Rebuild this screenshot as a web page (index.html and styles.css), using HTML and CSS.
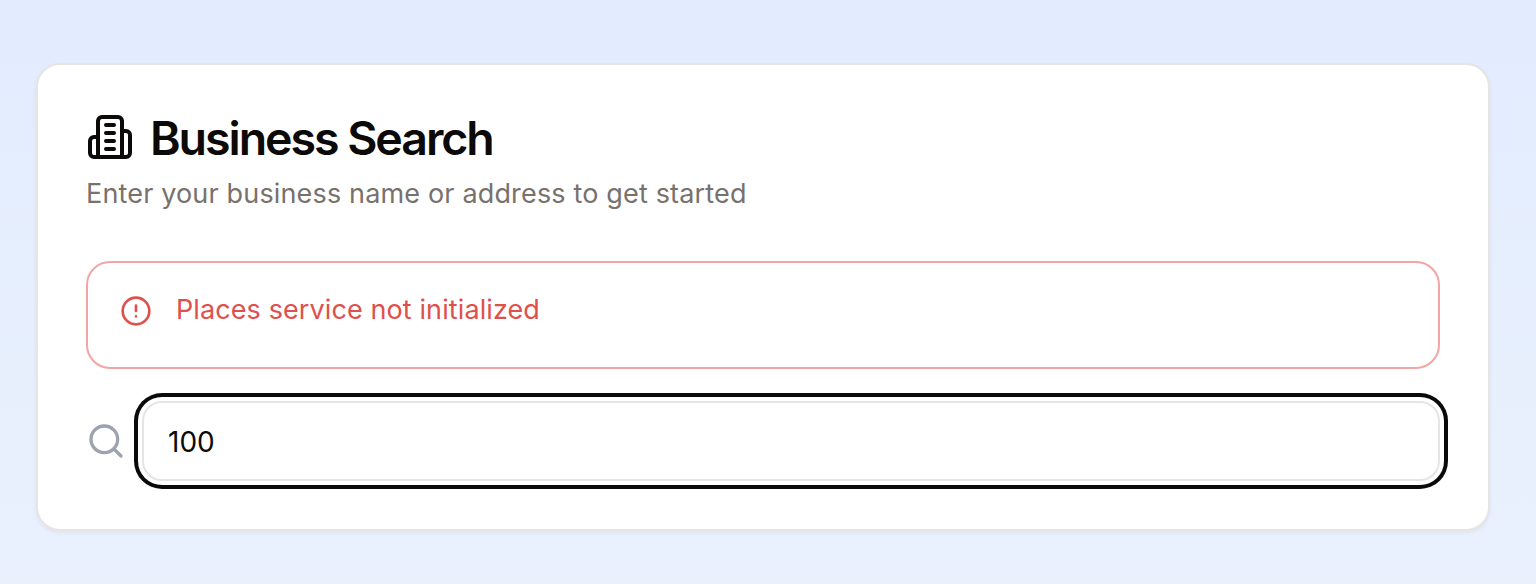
FILE: index.html
```html
<!DOCTYPE html>
<html lang="en">
<head>
<meta charset="utf-8">
<title>Business Search</title>
<link rel="stylesheet" href="styles.css">
</head>
<body>
<main class="card">
  <header class="card-header">
    <h1 class="title">
      <svg class="title-icon" viewBox="0 0 24 24"><path d="M6 22V4a2 2 0 0 1 2-2h8a2 2 0 0 1 2 2v18Z"/><path d="M6 12H4a2 2 0 0 0-2 2v6a2 2 0 0 0 2 2h2"/><path d="M18 9h2a2 2 0 0 1 2 2v9a2 2 0 0 1-2 2h-2"/><path d="M10 6h4M10 10h4M10 14h4M10 18h4"/></svg>
      <span class="title-text">Business Search</span>
    </h1>
    <p class="description">Enter your business name or address to get started</p>
  </header>
  <div class="alert" role="alert">
    <svg class="alert-icon" viewBox="0 0 24 24"><circle cx="12" cy="12" r="10"/><path d="M12 8v4M12 16h.01"/></svg>
    <span class="alert-text">Places service not initialized</span>
  </div>
  <div class="search">
    <svg class="search-icon" viewBox="0 0 24 24"><circle cx="11" cy="11" r="8"/><path d="m21 21-4.3-4.3"/></svg>
    <input class="search-input" type="text" value="100" aria-label="Business name or address">
  </div>
</main>
</body>
</html>
```
FILE: styles.css
```css
* { box-sizing: border-box; }
body {
  margin: 0;
  height: 584px;
  padding: 63px 46px 0 36px;
  overflow: hidden;
  background: linear-gradient(#e2ecfe, #eaf1fd);
  color: #0c0a09;
  font-family: Inter, sans-serif;
}
svg {
  flex: none;
  fill: none;
  stroke: currentColor;
  stroke-width: 2;
  stroke-linecap: round;
  stroke-linejoin: round;
}
.card {
  height: 468px;
  padding: 48px;
  background: #fff;
  border: 2px solid #e7e5e4;
  border-radius: 24px;
  box-shadow: 0 2px 4px rgba(0, 0, 0, 0.05);
}
.card-header {
  display: flex;
  flex-direction: column;
  gap: 12px;
}
.title {
  display: flex;
  align-items: center;
  gap: 16px;
  height: 48px;
  margin: 0;
  font-size: 46.5px;
  font-weight: 600;
  line-height: 48px;
  letter-spacing: -2.05px;
}
.title-icon { width: 48px; height: 48px; }
.title-text { padding-top: 1px; }
.description {
  height: 40px;
  margin: 0;
  color: #78716c;
  font-size: 27px;
  line-height: 42px;
  letter-spacing: 0.16px;
}
.alert {
  display: flex;
  gap: 24px;
  height: 108px;
  margin-top: 48px;
  padding: 32px;
  border: 2px solid #f1a5a4;
  border-radius: 24px;
  color: #df504d;
}
.alert-icon { width: 32px; height: 32px; }
.alert-text {
  font-size: 27px;
  line-height: 29px;
  letter-spacing: 0.1px;
}
.search {
  display: flex;
  align-items: center;
  gap: 16px;
  margin-top: 32px;
}
.search-icon { width: 40px; height: 40px; color: #9ca3af; }
.search-input {
  flex: 1;
  min-width: 0;
  height: 80px;
  padding: 2px 24px 0;
  border: 2px solid #e5e5e5;
  border-radius: 20px;
  outline: none;
  background: #fff;
  box-shadow: 0 0 0 4px #fff, 0 0 0 8px #0c0a09;
  color: #0c0a09;
  font: 28px Inter, sans-serif;
}
```
